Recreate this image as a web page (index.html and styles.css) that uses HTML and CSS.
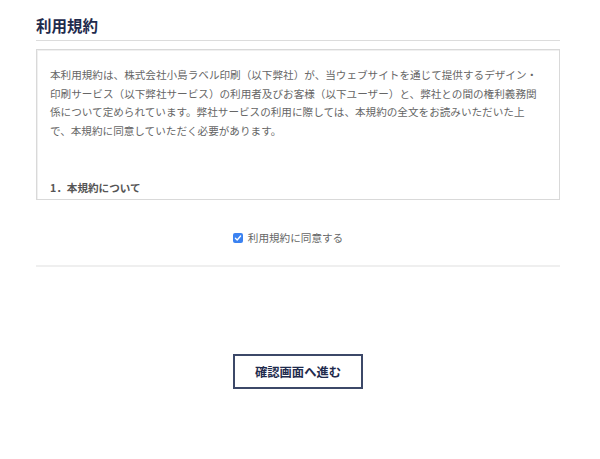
FILE: index.html
```html
<!DOCTYPE html>
<html lang="ja">
<head>
<meta charset="utf-8">
<title>利用規約</title>
<link rel="stylesheet" href="styles.css">
</head>
<body>
<main class="page">
  <h1 class="title">利用規約</h1>
  <div class="terms">
    <p class="terms-text">本利用規約は、株式会社小島ラベル印刷（以下弊社）が、当ウェブサイトを通じて提供するデザイン・<br>印刷サービス（以下弊社サービス）の利用者及びお客様（以下ユーザー）と、弊社との間の権利義務関<br>係について定められています。弊社サービスの利用に際しては、本規約の全文をお読みいただいた上<br>で、本規約に同意していただく必要があります。</p>
    <h2 class="terms-heading">1．本規約について</h2>
  </div>
  <label class="agree">
    <span class="check" aria-hidden="true"><svg viewBox="0 0 10 10" width="10" height="10"><path d="M2.4 5.2 L4.2 7 L7.6 3" fill="none" stroke="#fff" stroke-width="1.3" stroke-linecap="round" stroke-linejoin="round"/></svg></span>
    <span class="agree-text">利用規約に同意する</span>
  </label>
  <div class="actions">
    <button class="btn" type="button">確認画面へ進む</button>
  </div>
</main>
</body>
</html>
```
FILE: styles.css
```css
* { box-sizing: border-box; }
html, body { margin: 0; padding: 0; background: #fff; }
body {
  font-family: "Noto Sans CJK JP", "Noto Sans", sans-serif;
  color: #666;
}
.page {
  width: 524px;
  margin-left: 36px;
}
.title {
  margin: 14px 0 8px;
  padding-bottom: 4px;
  font-size: 15.5px;
  line-height: 22px;
  font-weight: 700;
  color: #1f2b4d;
  border-bottom: 1px solid #dcdcdc;
}
.terms {
  height: 151px;
  overflow: hidden;
  border: 1px solid #d9d9d9;
  box-shadow: inset 1px 1px 0 #f0f0f0;
  padding: 16px 13px 0;
}
.terms-text {
  margin: 0;
  font-size: 10.6px;
  line-height: 18.7px;
  color: #666;
}
.terms-heading {
  margin: 38px 0 0;
  font-size: 10.6px;
  line-height: 18.7px;
  font-weight: 700;
  color: #555;
}
.agree {
  display: flex;
  align-items: center;
  justify-content: center;
  gap: 5px;
  height: 18px;
  margin-top: 29px;
  padding-right: 20px;
  padding-bottom: 18px;
  box-sizing: content-box;
  border-bottom: 2px solid #efefef;
}
.check {
  display: flex;
  width: 10px;
  height: 10px;
  border-radius: 2px;
  background: #3b82f1;
}
.agree-text {
  font-size: 10.6px;
  line-height: 18px;
  color: #666;
}
.actions {
  display: flex;
  justify-content: center;
  margin-top: 87px;
}
.btn {
  width: 130px;
  height: 35px;
  border: 2px solid #3c4868;
  background: #fff;
  color: #1f2b4d;
  font-family: "Noto Sans CJK JP", "Noto Sans", sans-serif;
  font-size: 12.3px;
  font-weight: 700;
  padding: 0;
}
```
